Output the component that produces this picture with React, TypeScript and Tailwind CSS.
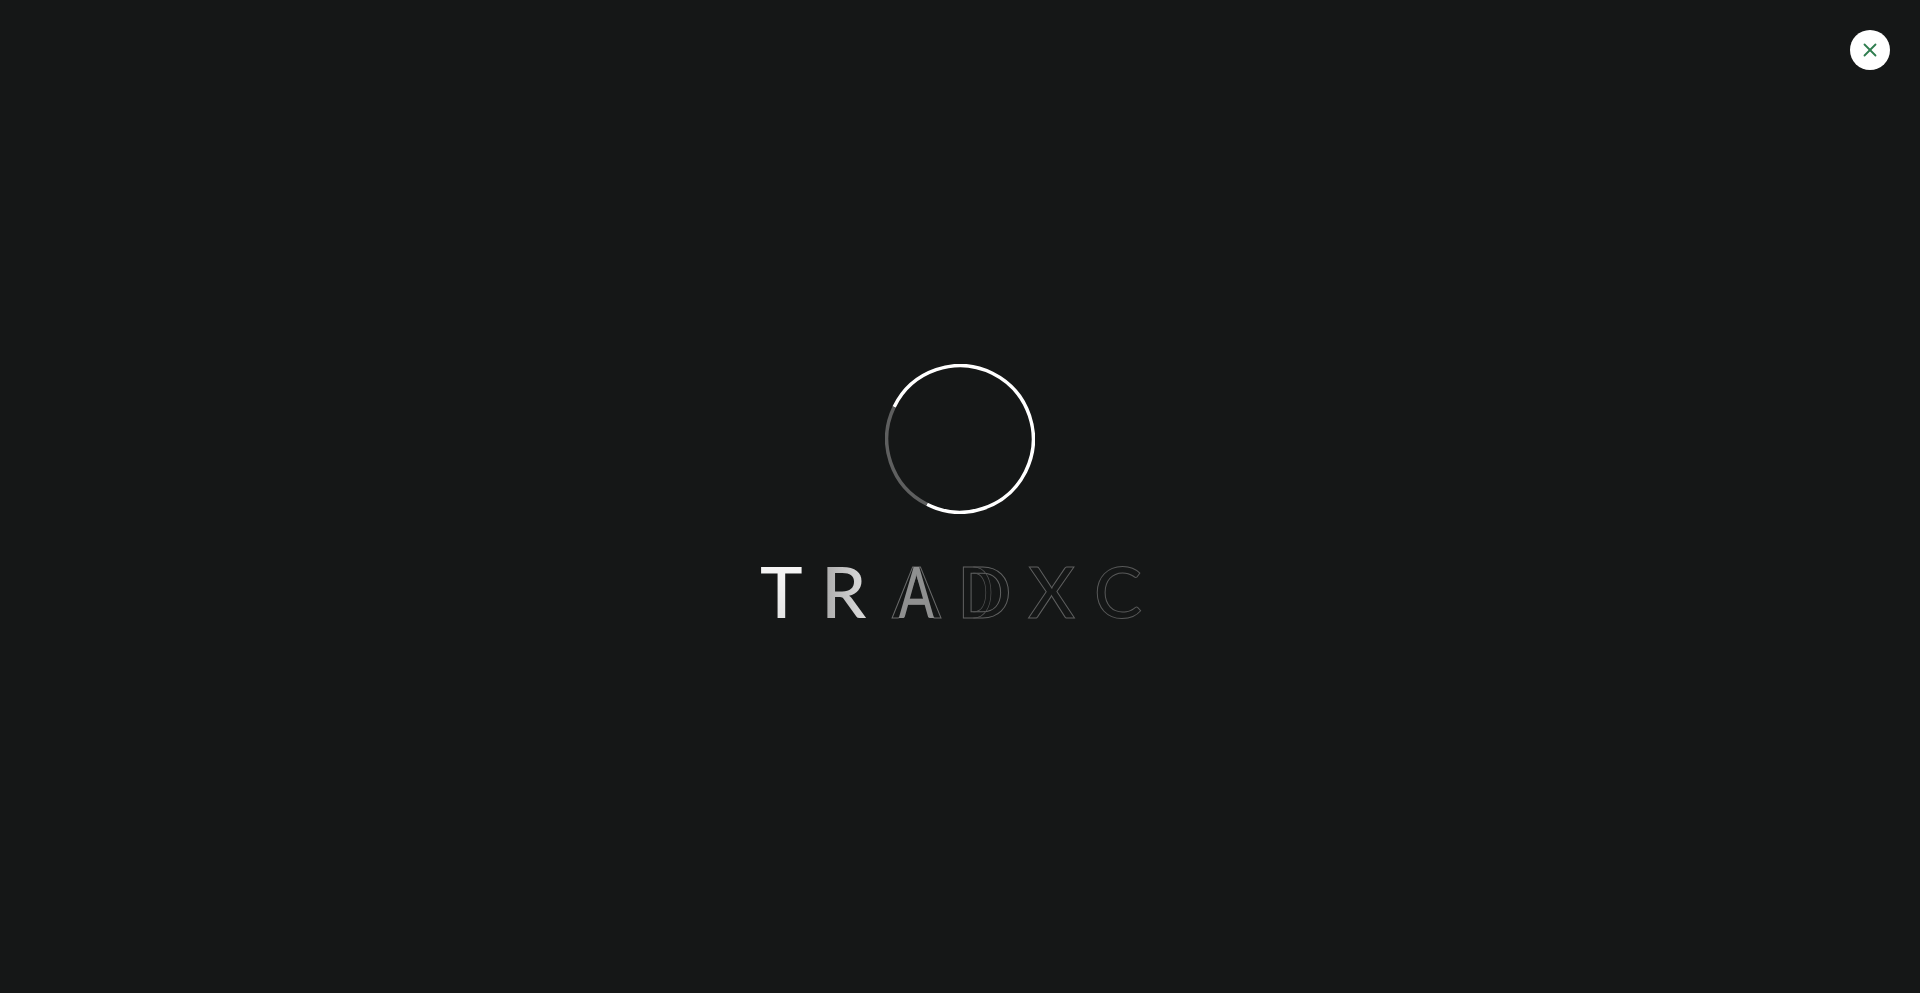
import { X } from 'lucide-react';

export default function App() {
  return (
    <div className="relative min-h-screen bg-[#151717] flex flex-col items-center justify-center pb-1 font-['Lato',sans-serif]">
      <button className="absolute top-[30px] right-[30px] w-10 h-10 rounded-full bg-white flex items-center justify-center text-[#2f7d4f]">
        <X size={22} strokeWidth={2} />
      </button>

      {/* spinner ring, the left arc is the dim part */}
      <svg className="w-[150px] h-[150px] block mt-[1px]" viewBox="0 0 150 150" fill="none">
        <path d="M 9.1 43 A 73.25 73.25 0 1 1 41.9 140.3" stroke="#ffffff" strokeWidth="3.5" />
        <path d="M 41.9 140.3 A 73.25 73.25 0 0 1 9.1 43" stroke="#5e5f5f" strokeWidth="3.5" />
      </svg>

      <div className="mt-[39px] flex pr-[18px] text-[72px] leading-[74px] font-medium">
        <span className="w-[61px] text-transparent bg-clip-text bg-gradient-to-b from-[#fafafa] to-[#e2e2e2]">T</span>
        <span className="w-[71px] text-transparent bg-clip-text bg-gradient-to-r from-[#a8a8a8] via-[#d2d2d2] to-[#e6e6e6]">R</span>
        <span className="relative w-[65px] text-transparent [-webkit-text-stroke:1px_#686969] before:absolute before:left-0 before:top-0 before:content-['A'] before:scale-x-[0.72] before:origin-[24px_50%] before:text-[#8f9090] before:[-webkit-text-stroke:0]">
          A
        </span>
        <span className="relative w-[71px] text-transparent [-webkit-text-stroke:1px_#606161] before:absolute before:left-0 before:top-0 before:content-['D'] before:scale-x-[0.66] before:origin-left before:[clip-path:inset(0_0_0_45%)] before:[-webkit-text-stroke:1px_#525353]">
          D
        </span>
        <span className="w-[66px] text-transparent [-webkit-text-stroke:1px_#5e5f5f]">X</span>
        <span className="text-transparent [-webkit-text-stroke:1px_#585959]">C</span>
      </div>
    </div>
  );
}
